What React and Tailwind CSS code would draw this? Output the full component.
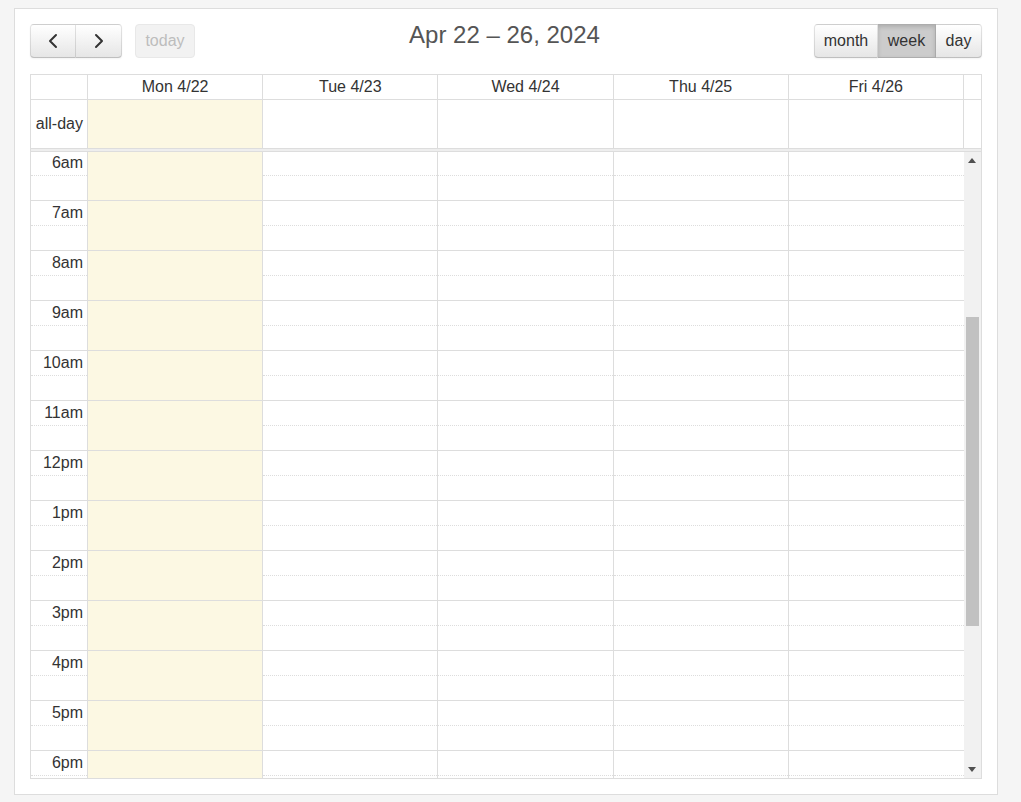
import { ChevronLeft, ChevronRight } from 'lucide-react';

const DAYS = ['Mon 4/22', 'Tue 4/23', 'Wed 4/24', 'Thu 4/25', 'Fri 4/26'];
const HOURS = ['6am', '7am', '8am', '9am', '10am', '11am', '12pm', '1pm', '2pm', '3pm', '4pm', '5pm', '6pm'];

const btn =
  'h-[34px] flex items-center justify-center text-base text-[#333] bg-gradient-to-b from-white to-[#e6e6e6] border border-[rgba(0,0,0,0.1)] border-b-[rgba(0,0,0,0.25)] shadow-[inset_0_1px_0_rgba(255,255,255,0.2),0_1px_2px_rgba(0,0,0,0.05)]';

function Slots({ today, axis, last }) {
  return (
    <div className={`flex flex-col -mt-[2px] ${today ? 'bg-[#fcf8e3]' : ''} ${last ? '' : 'border-r border-[#ddd]'}`}>
      {HOURS.map((h) => (
        <div key={h} className="h-[50px] shrink-0 border-t border-[#ddd] flex flex-col">
          <div className="h-[24px] shrink-0">
            {axis && <div className="pt-[3px] pr-[4px] text-right leading-[18px] text-[#333]">{h}</div>}
          </div>
          <div className={`h-[25px] shrink-0 border-t border-dotted ${today ? 'border-transparent' : 'border-[#ddd]'}`} />
        </div>
      ))}
    </div>
  );
}

function Triangle({ down }) {
  return (
    <svg width="8" height="5" viewBox="0 0 8 5">
      <polygon points={down ? '0,0 8,0 4,5' : '0,5 8,5 4,0'} fill="#505050" />
    </svg>
  );
}

export default function App() {
  return (
    <div className="min-h-screen bg-[#f5f5f5] pt-[8px] pl-[14px]" style={{ fontFamily: '"Liberation Sans", Arial, sans-serif' }}>
      <div className="w-[984px] h-[787px] bg-white border border-[#ddd] p-[15px] flex flex-col">
        {/* toolbar */}
        <div className="grid grid-cols-[1fr_auto_1fr] items-start h-[34px] mb-4">
          <div className="flex items-center">
            <div className="flex">
              <button className={`${btn} w-[46px] rounded-l-[4px]`}>
                <ChevronLeft size={24} strokeWidth={2} />
              </button>
              <button className={`${btn} w-[46px] rounded-r-[4px] border-l-0`}>
                <ChevronRight size={24} strokeWidth={2} />
              </button>
            </div>
            <button className="ml-[13px] h-[34px] w-[60px] rounded-[4px] bg-[#f2f2f2] border border-[#e8e8e8] text-[#bdbdbd] text-base">
              today
            </button>
          </div>
          <h2 className="-mt-[3px] -ml-[3px] text-[24px] leading-[28px] text-[#555]">Apr 22 – 26, 2024</h2>
          <div className="flex justify-end">
            <button className={`${btn} w-[64px] rounded-l-[4px]`}>month</button>
            <button className="h-[34px] w-[58px] border border-[rgba(0,0,0,0.15)] border-l-0 bg-[#ccc] text-[#333] text-base shadow-[inset_0_2px_4px_rgba(0,0,0,0.15)]">
              week
            </button>
            <button className={`${btn} w-[46px] rounded-r-[4px] border-l-0`}>day</button>
          </div>
        </div>

        {/* calendar */}
        <div className="flex flex-col border border-[#ddd] text-base text-[#333]">
          <div className="grid grid-cols-[57px_repeat(5,1fr)_17px] h-[25px] border-b border-[#ddd]">
            <div className="border-r border-[#ddd]" />
            {DAYS.map((d) => (
              <div key={d} className="border-r border-[#ddd] text-center leading-[24px]">
                {d}
              </div>
            ))}
            <div />
          </div>
          <div className="grid grid-cols-[57px_repeat(5,1fr)_17px] h-[49px] border-b border-[#ddd]">
            <div className="border-r border-[#ddd] flex items-center justify-end pr-[4px]">all-day</div>
            {DAYS.map((d, i) => (
              <div key={d} className={`border-r border-[#ddd] ${i === 0 ? 'bg-[#fcf8e3]' : ''}`} />
            ))}
            <div />
          </div>
          <div className="h-[3px] bg-[#eee] border-b border-[#ddd]" />
          <div className="h-[626px] overflow-hidden grid grid-cols-[57px_repeat(5,1fr)_17px] items-start">
            <Slots axis />
            {DAYS.map((d, i) => (
              <Slots key={d} today={i === 0} last={i === DAYS.length - 1} />
            ))}
            <div className="h-[626px] bg-[#f1f1f1] flex flex-col items-center">
              <div className="h-[17px] w-full flex items-center justify-center">
                <Triangle />
              </div>
              <div className="h-[148px]" />
              <div className="h-[309px] w-[13px] bg-[#c1c1c1]" />
              <div className="flex-1" />
              <div className="h-[17px] w-full flex items-center justify-center">
                <Triangle down />
              </div>
            </div>
          </div>
        </div>
      </div>
    </div>
  );
}
